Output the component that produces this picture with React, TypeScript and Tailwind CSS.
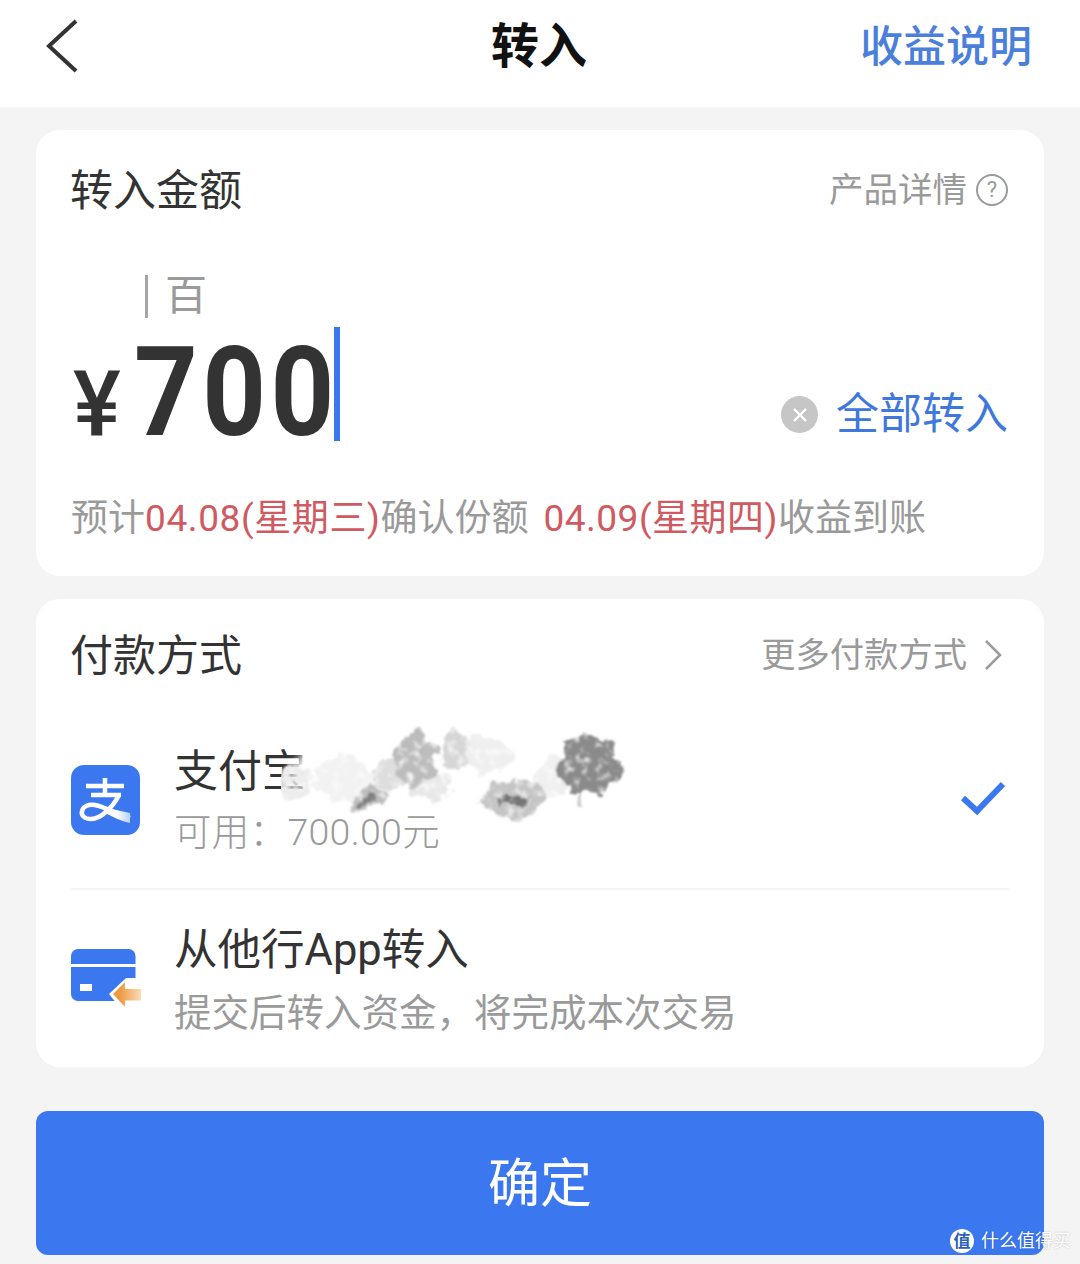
import React from 'react'

const cjk = "font-['Roboto','Noto_Sans_CJK_SC',sans-serif]"

const AlipayIcon = () => (
  <svg width="70" height="70" viewBox="0 0 70 70" className="shrink-0 mb-[1px]">
    <defs>
      <linearGradient id="zfb" x1="0" x2="1" y1="0" y2="0">
        <stop offset="0.5" stopColor="#ffffff" />
        <stop offset="1" stopColor="#b9d0f8" />
      </linearGradient>
    </defs>
    <rect x="0" y="0" width="69" height="70" rx="13" fill="#3b78f0" />
    <path d="M34 13v15M15 21h38M20 30h30" stroke="#fff" strokeWidth="4.5" fill="none" />
    <path d="M48 30C42 42 30 54 20 54C13 54 10 50 11 46C12 41 18 39 24 40C34 42 46 49 59 53" stroke="#fff" strokeWidth="4.5" fill="none" />
    <path d="M36 43L59 48V58C50 56 42 52 32 47z" fill="url(#zfb)" />
  </svg>
)

const CardIcon = () => (
  <svg width="70" height="60" viewBox="0 0 70 60" className="shrink-0 mt-[3px]">
    <defs>
      <linearGradient id="arrow" x1="0" x2="1" y1="0" y2="0">
        <stop offset="0.25" stopColor="#ef9a43" />
        <stop offset="1" stopColor="#f9dcb8" />
      </linearGradient>
    </defs>
    <path d="M0 7a7 7 0 0 1 7-7h50.500a7 7 0 0 1 7 7v8H0z" fill="#3b78f0" />
    <path d="M0 18h64.500v31a3 3 0 0 1-3 3H7a7 7 0 0 1-7-7z" fill="#3b78f0" />
    <rect x="9" y="35" width="12" height="7" fill="#fff" />
    <path d="M38 45L55 29H70V60H50z" fill="#fff" />
    <path d="M42 45L54 33V40H70V51.500H54V58z" fill="url(#arrow)" />
  </svg>
)

const Smudge = () => (
  <svg width="350" height="120" viewBox="0 0 350 120" className="absolute left-[210px] top-[2px] pointer-events-none">
    <defs>
      <filter id="soft" x="-30%" y="-30%" width="160%" height="160%"><feGaussianBlur stdDeviation="5" /></filter>
      <filter id="ink" x="-30%" y="-30%" width="160%" height="160%">
        <feTurbulence type="fractalNoise" baseFrequency="0.06" numOctaves="4" seed="7" result="n" />
        <feDisplacementMap in="SourceGraphic" in2="n" scale="22" xChannelSelector="R" yChannelSelector="G" result="d" />
        <feTurbulence type="fractalNoise" baseFrequency="0.12" numOctaves="3" seed="3" />
        <feColorMatrix type="matrix" values="0 0 0 0 0  0 0 0 0 0  0 0 0 0 0  2.400 0 0 0 -0.200" result="m" />
        <feComposite in="d" in2="m" operator="in" />
        <feGaussianBlur stdDeviation="0.800" />
      </filter>
    </defs>
    <g filter="url(#soft)">
      <ellipse cx="28" cy="57" rx="14" ry="20" fill="#fff" />
      <ellipse cx="79" cy="52" rx="60" ry="32" fill="#fff" />
      <ellipse cx="224" cy="52" rx="42" ry="30" fill="#fff" />
    </g>
    <g filter="url(#ink)">
      <ellipse cx="14" cy="68" rx="16" ry="18" fill="#ececec" />
      <ellipse cx="62" cy="64" rx="30" ry="22" fill="#f2f2f2" />
      <ellipse cx="150" cy="72" rx="22" ry="14" fill="#e8e8e8" />
      <ellipse cx="204" cy="40" rx="26" ry="20" fill="#efefef" />
      <ellipse cx="272" cy="62" rx="18" ry="20" fill="#f0f0f0" />
      <ellipse cx="110" cy="60" rx="17" ry="17" fill="#dedede" />
      <ellipse cx="134" cy="44" rx="21" ry="28" fill="#bcbcbc" />
      <ellipse cx="88" cy="84" rx="16" ry="13" fill="#bcbcbc" />
      <ellipse cx="86" cy="88" rx="8" ry="5" fill="#808080" />
      <ellipse cx="174" cy="36" rx="15" ry="19" fill="#d6d6d6" />
      <ellipse cx="233" cy="84" rx="32" ry="19" fill="#c4c4c4" />
      <ellipse cx="233" cy="86" rx="17" ry="6" fill="#747474" />
      <ellipse cx="308" cy="50" rx="30" ry="30" fill="#8a8a8a" />
      <ellipse cx="297" cy="86" rx="4" ry="7" fill="#cccccc" />
    </g>
  </svg>
)

const App = () => {
  return (
    <main className={`relative w-[1080px] h-[1264px] overflow-hidden bg-[#f4f4f4] ${cjk}`}>
      <div className="h-[107px] bg-white flex items-center pl-[46px] pr-[48px]">
        <div className="flex-1">
          <svg width="32" height="54" viewBox="0 0 32 54" className="mb-[15px]">
            <path d="M30 2L3 27l27 25" stroke="#333" strokeWidth="4" fill="none" />
          </svg>
        </div>
        <p className="text-[48px] font-bold text-[#111] mb-[13px] leading-none">转入</p>
        <div className="flex-1 flex justify-end">
          <p className="text-[43px] font-medium text-[#4a7fdc] mb-[13px] leading-none">收益说明</p>
        </div>
      </div>

      <div className="px-[36px] pt-[23px]">
        <section className="h-[446px] bg-white rounded-[24px] px-[35px]">
          <div className="h-[122px] flex items-center justify-between">
            <p className="text-[43px] text-[#333] leading-none -ml-[1px]">转入金额</p>
            <div className="flex items-center gap-[9px] text-[#9a9a9a] mr-[1px] mb-[2px]">
              <span className="text-[34.500px] leading-none">产品详情</span>
              <span className="w-[32px] h-[32px] rounded-full border-[2px] border-[#9a9a9a] flex items-center justify-center text-[22px] leading-none">?</span>
            </div>
          </div>
          <div className="flex items-center pl-[74px] h-[46px] mt-[21px]">
            <span className="w-[3px] h-[43px] bg-[#a5a5a5]" />
            <span className="ml-[17px] text-[42px] text-[#9a9a9a] leading-none">百</span>
          </div>
          <div className="flex items-start justify-between h-[114px] mt-[8px]">
            <div className="flex items-baseline">
              <span className="text-[90px] font-medium text-[#333] leading-none ml-[2px]">¥</span>
              <span className="inline-block origin-left scale-x-[0.89] text-[125px] font-bold text-[#333] leading-[132px] ml-[13px] tracking-[5px]">700</span>
              <span className="w-[6px] h-[114px] bg-[#3b78f0] -ml-[30px] self-start" />
            </div>
            <div className="flex items-center gap-[18px] mr-[1px] mt-[66px]">
              <span className="w-[37px] h-[37px] rounded-full bg-[#c6c6c6] flex items-center justify-center">
                <svg width="16" height="16" viewBox="0 0 16 16">
                  <path d="M2 2l12 12M14 2L2 14" stroke="#fff" strokeWidth="2.400" />
                </svg>
              </span>
              <span className="text-[43px] text-[#3f78dc] leading-none">全部转入</span>
            </div>
          </div>
          <p className="mt-[59px] text-[37px] leading-none text-[#9a9a9a] whitespace-nowrap">
            预计<span className="text-[#cf5a62] tracking-[0.600px]">04.08(星期三)</span>确认份额<span className="ml-[15px] text-[#cf5a62] tracking-[0.500px]">04.09(星期四)</span>收益到账
          </p>
        </section>

        <section className="relative h-[468px] mt-[23px] bg-white rounded-[24px] px-[35px]">
          <div className="h-[114px] flex items-center justify-between">
            <p className="text-[43px] text-[#333] leading-none -ml-[1px]">付款方式</p>
            <div className="flex items-center gap-[17px] text-[#9a9a9a] mr-[7px] mb-[2px]">
              <span className="text-[34.300px] leading-none">更多付款方式</span>
              <svg width="18" height="32" viewBox="0 0 18 32">
                <path d="M2 2l14 14L2 30" stroke="#9a9a9a" strokeWidth="2.500" fill="none" />
              </svg>
            </div>
          </div>
          <div className="relative h-[177px] flex items-center border-b-[2px] border-[#f5f5f5]">
            <AlipayIcon />
            <div className="ml-[33px] flex flex-col gap-[13px]">
              <p className="text-[44px] leading-[50px] text-[#333]">支付宝</p>
              <p className="text-[37.500px] leading-[44px] text-[#9a9a9a] font-light tracking-[0.300px]">可用：700.00元</p>
            </div>
            <svg width="44" height="34" viewBox="0 0 44 34" className="ml-auto mr-[4px] mb-[5px]">
              <path d="M2 17l14 13L42 3" stroke="#3b78f0" strokeWidth="6" fill="none" />
            </svg>
            <Smudge />
          </div>
          <div className="h-[175px] flex items-center">
            <CardIcon />
            <div className="ml-[33px] flex flex-col gap-[15px] mt-[6px]">
              <p className="text-[43.500px] leading-[50px] text-[#333]">从他行App转入</p>
              <p className="text-[37.500px] leading-[44px] text-[#9a9a9a]">提交后转入资金，将完成本次交易</p>
            </div>
          </div>
        </section>

        <button className="w-full h-[144px] mt-[44px] pt-[3px] bg-[#3b78f0] rounded-[12px] text-white text-[52px] leading-none flex items-center justify-center">
          确定
        </button>
      </div>

      <div className="absolute left-[950px] top-[1229px] flex items-center gap-[7px]">
        <span className="w-[24px] h-[24px] rounded-full bg-white text-[#2b5fb8] text-[17px] font-bold flex items-center justify-center leading-none">值</span>
        <span className="text-[18px] leading-none text-white [text-shadow:0_0_2px_rgba(0,0,0,0.25)] whitespace-nowrap">什么值得买</span>
      </div>
    </main>
  )
}

export default App
